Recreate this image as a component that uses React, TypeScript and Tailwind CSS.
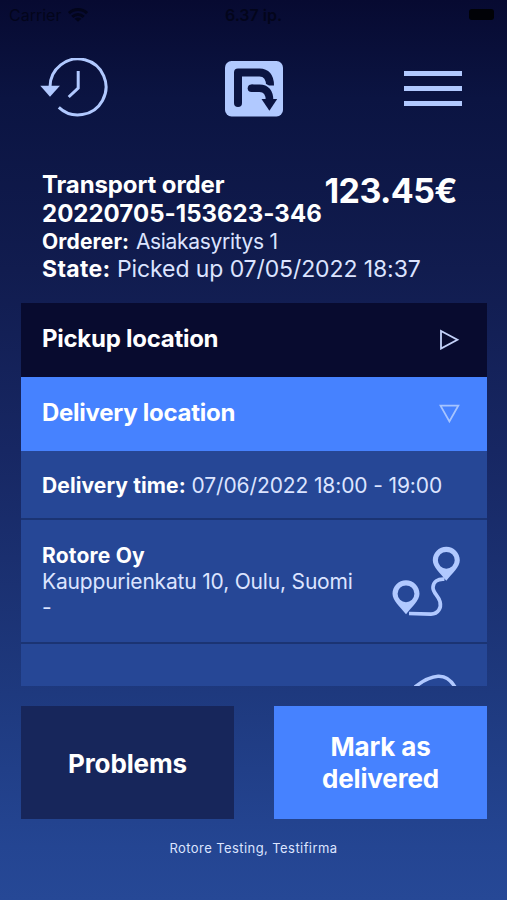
import React from "react";

const sections = [
  { title: "Pickup location", open: false },
  { title: "Delivery location", open: true },
];

function WifiIcon() {
  return (
    <svg width="20" height="14" viewBox="0 0 20 14" fill="none" stroke="currentColor" strokeWidth="3">
      <path d="M1 5.2C6 .4 14 .4 19 5.2" />
      <path d="M4.3 8.8c3.3-3 8.1-3 11.4 0" />
      <path d="M10 13.8 6.6 10.8c2-1.6 4.8-1.6 6.8 0z" fill="currentColor" stroke="none" />
    </svg>
  );
}

function HistoryIcon() {
  return (
    <svg width="68" height="60" viewBox="0 0 68 60" fill="none" stroke="#b1c9ff" strokeWidth="3">
      <path d="M10 29A28 28 0 1 1 18.8 49.3" />
      <path d="M38.2 13v17l-9.5 9" />
      <path d="M.3 27.7h19.6L10 38.7z" fill="#b1c9ff" stroke="none" />
    </svg>
  );
}

function Logo() {
  return (
    <svg width="58" height="56" viewBox="0 0 58 56" fill="none">
      <rect width="58" height="55.5" rx="6.5" fill="#b1c9ff" />
      <path d="M13 42V11.5h21.500c6.500 0 10.500 4 10.500 13" stroke="#0b1442" strokeWidth="8" strokeLinejoin="round" />
      <circle cx="13" cy="42" r="4" fill="#0b1442" />
      <path d="M34 25.500c6.500 0 11 3.500 11 12.500" stroke="#b1c9ff" strokeWidth="8" />
      <path d="M26.500 27.200h8c6.500 0 10 4 10 12" stroke="#0b1442" strokeWidth="7.600" />
      <circle cx="26.500" cy="27.200" r="3.800" fill="#0b1442" />
      <path d="M36.500 38h15.700l-7.800 11.800z" fill="#0b1442" />
    </svg>
  );
}

function RouteIcon() {
  return (
    <svg width="68" height="72" viewBox="0 0 68 72" fill="none">
      <path
        d="M17 67.500l22 .6c7.500 0 10.500-6.500 9-12.500-1.500-6-7.500-9-7-14.500.4-5 4.500-8.500 11.500-8"
        stroke="#b1c9ff"
        strokeWidth="3.7"
      />
      {/* Start and end pins */}
      <path
        fill="#b1c9ff"
        fillRule="evenodd"
        d="M14 34.2c7.500 0 13.500 6 13.500 13.500 0 7-7.500 13-13.500 20.500C8 60.700.5 54.700.5 47.700c0-7.500 6-13.500 13.500-13.500zm0 5.200a8.400 8.400 0 1 0 0 16.800 8.400 8.400 0 0 0 0-16.800z"
      />
      <path
        fill="#b1c9ff"
        fillRule="evenodd"
        d="M54.3.7c7.500 0 13.500 6 13.500 13.500 0 7-7.500 13-13.500 20.500-6-7.500-13.500-13.500-13.500-20.500C40.800 6.700 46.800.7 54.3.7zm0 5.200a8.400 8.400 0 1 0 0 16.800 8.400 8.400 0 0 0 0-16.800z"
      />
    </svg>
  );
}

function Chevron({ open }: { open: boolean }) {
  return (
    <svg width="22" height="22" viewBox="0 0 22 22" fill="none" strokeWidth="1.8">
      {open ? (
        <path d="M1.500 3.700h17.800l-8.900 15.800z" stroke="#a6c4ff" />
      ) : (
        <path d="M2 3v17.600l16.400-8.800z" stroke="#c4d2fa" />
      )}
    </svg>
  );
}

export default function App() {
  return (
    <main className="flex h-[900px] w-[507px] flex-col overflow-hidden bg-[linear-gradient(180deg,#070a31_0%,#0b1442_11%,#111c4f_30%,#172763_50%,#1e397e_77%,#244592_94%,#264896_100%)] font-[Inter,sans-serif] text-white">
      {/* Status bar */}
      <div className="grid h-[30px] grid-cols-3 items-center px-[9px] text-[16px] text-[#03051b]">
        <div className="flex items-center gap-[7px] pb-px">
          <span>Carrier</span>
          <WifiIcon />
        </div>
        <span className="text-center font-semibold">6.37 ip.</span>
        <div className="mr-[4px] mb-[2px] h-[11px] w-[25px] justify-self-end rounded-[3px] bg-[#010207]" />
      </div>

      <header className="flex h-[118px] items-center justify-between pr-[45px] pl-10">
        <button aria-label="History" className="-mt-[3px]">
          <HistoryIcon />
        </button>
        <div className="mr-[5px]">
          <Logo />
        </div>
        <button aria-label="Menu" className="-mt-[2px] flex flex-col gap-[10px]">
          <span className="h-[5px] w-[58px] bg-[#b1c9ff]" />
          <span className="h-[5px] w-[58px] bg-[#b1c9ff]" />
          <span className="h-[5px] w-[58px] bg-[#b1c9ff]" />
        </button>
      </header>

      <section className="flex h-[155px] justify-between pt-[22px] pr-[50px] pl-[42px]">
        <div className="whitespace-nowrap">
          <h1 className="w-[282px] text-[24px] leading-[29px] font-bold tracking-[-0.12px]">
            Transport order
            <br />
            <span className="tracking-[0.02px]">20220705-153623-346</span>
          </h1>
          <p className="text-[21px] leading-[27px] tracking-[-0.32px] text-[#dce4ff]">
            <b className="mr-[1px] font-bold tracking-[0.15px] text-white">Orderer:</b> Asiakasyritys 1
          </p>
          <p className="w-0 text-[23px] leading-[29px] tracking-[-0.1px] text-[#dce4ff]">
            <b className="font-bold tracking-[0.35px] text-white">State:</b> Picked up 07/05/2022 18:37
          </p>
        </div>
        <span className="pt-px text-[34px] leading-[40px] font-bold tracking-[-0.6px]">123.45€</span>
      </section>

      <section className="mr-5 ml-[21px] h-[383px] overflow-hidden">
        {sections.map((s) => (
          <button
            key={s.title}
            className={`flex h-[74px] w-full items-center justify-between pr-[26px] pb-[2px] pl-[21px] text-[24px] font-bold tracking-[-0.27px] ${
              s.open ? "bg-[#4682ff]" : "bg-[#080b2f]"
            }`}
          >
            {s.title}
            <Chevron open={s.open} />
          </button>
        ))}
        <div className="flex h-[69px] items-center border-b-2 border-[#1b3473] bg-[#264796] pt-[2px] pl-[21px] text-[21px] tracking-[-0.12px] whitespace-pre text-[#dce4ff]">
          <b className="font-bold tracking-[0.1px] text-white">Delivery time:</b> 07/06/2022 18:00 - 19:00
        </div>
        <div className="flex h-[124px] justify-between border-b-2 border-[#1b3473] bg-[#264796] pt-[23px] pr-[27px] pl-[21px]">
          <div className="text-[21px] leading-[26px] tracking-[-0.18px] text-[#dce4ff]">
            <h2 className="font-bold tracking-[0.2px] text-white">Rotore Oy</h2>
            <p>Kauppurienkatu 10, Oulu, Suomi</p>
            <p>-</p>
          </div>
          <div className="pt-[3px]">
            <RouteIcon />
          </div>
        </div>
        <div className="flex h-[42px] justify-end bg-[#264796] pt-[28px] pr-[28px]">
          <svg width="46" height="14" viewBox="0 0 46 14" fill="none">
            <path d="M2 15C9 9.500 17 4.700 25 4.300c8-.4 13 3.700 17 10.700" stroke="#b1c9ff" strokeWidth="3.5" />
          </svg>
        </div>
      </section>

      <div className="mt-5 mr-5 ml-[21px] grid h-[113px] grid-cols-2 gap-10 text-[26px] leading-[32px] font-bold tracking-[-0.15px]">
        <button className="pt-[2px] bg-[#17265b]">Problems</button>
        <button className="bg-[#4682ff] pt-px">
          Mark as
          <br />
          delivered
        </button>
      </div>

      <footer className="mt-5 text-center text-[13px] leading-[18px] tracking-[0.42px] text-[#dce4ff]">
        Rotore Testing, Testifirma
      </footer>
    </main>
  );
}
